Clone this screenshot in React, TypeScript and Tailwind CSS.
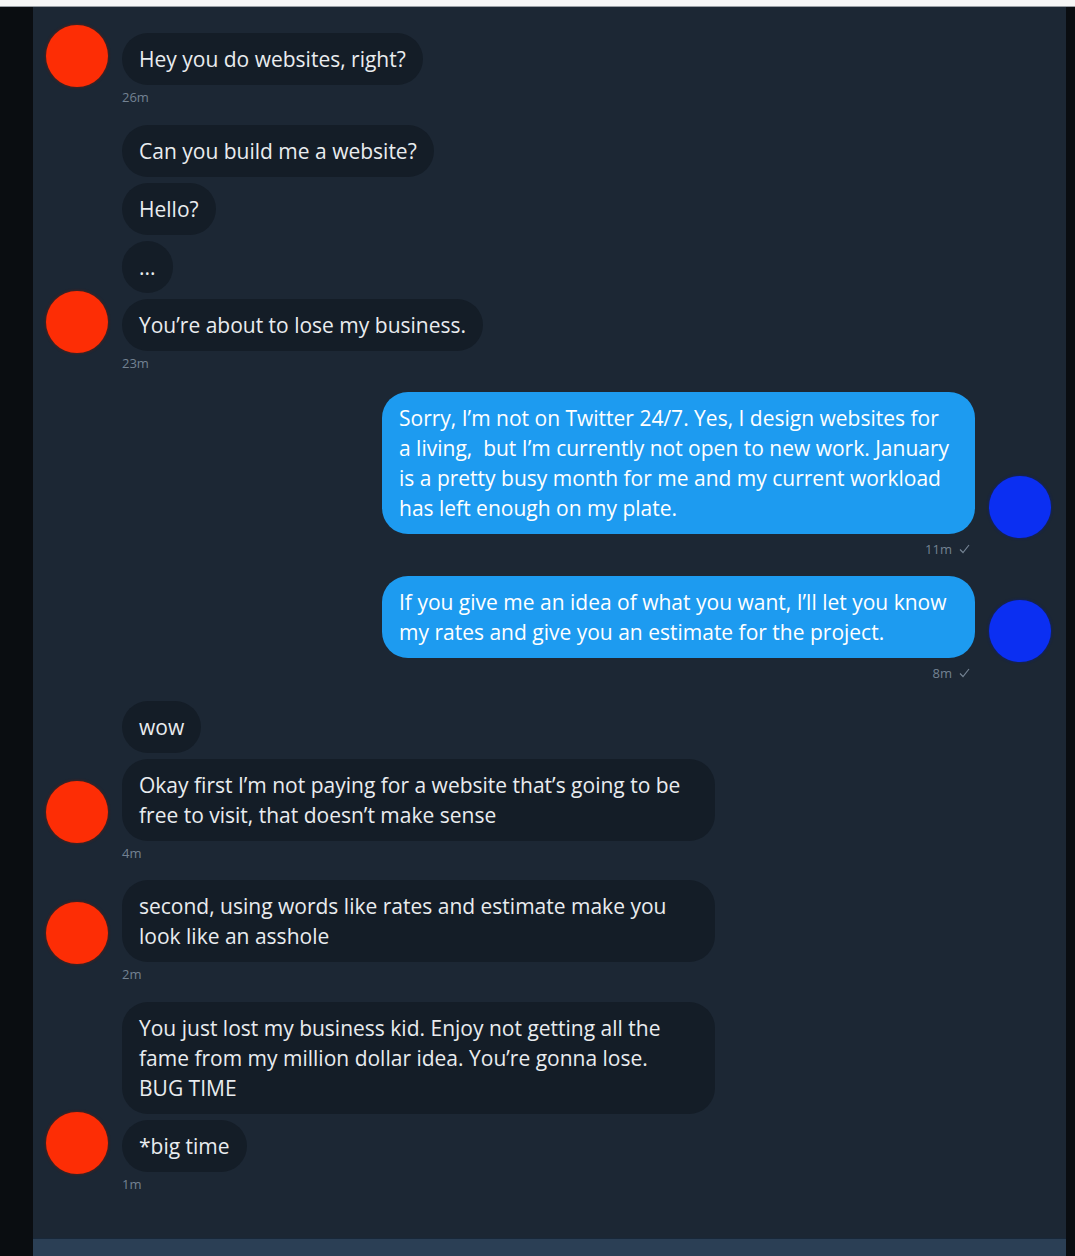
import React from 'react';

const font = { fontFamily: '"Open Sans", "Noto Sans", sans-serif' };

function Avatar({ color }: { color: 'red' | 'blue' }) {
  return (
    <div
      className={`w-[62px] h-[62px] rounded-full shrink-0 ${
        color === 'red' ? 'bg-[#fd2d05] shadow-[0_0_3px_#7a1a08]' : 'bg-[#0b2ff2] shadow-[0_0_3px_#0a1e8a]'
      }`}
    />
  );
}

function Bubble({ lines, wide, mine }: { lines: string[]; wide?: boolean; mine?: boolean }) {
  return (
    <div
      className={`rounded-[26px] px-[17px] py-[11px] text-[21px] leading-[30px] ${wide ? 'w-[593px]' : 'w-fit'} ${
        mine ? 'bg-[#1d9bf0] text-white' : 'bg-[#141d27] text-[#e9ecef]'
      }`}
    >
      {lines.map((l, i) => (
        <div key={i} className="whitespace-pre">{l}</div>
      ))}
    </div>
  );
}

function Stamp({ text, right }: { text: string; right?: boolean }) {
  return (
    <div className={`flex items-center gap-[7px] text-[13px] leading-[16px] text-[#738292] ${right ? 'justify-end pr-[81px] mt-[7px]' : 'pl-[76px] mt-[4px]'}`}>
      <span>{text}</span>
      {right && (
        <svg width="11" height="10" viewBox="0 0 11 10" fill="none">
          <path d="M1 5.5 L4 8.5 L10 1" stroke="#738292" strokeWidth="1.2" />
        </svg>
      )}
    </div>
  );
}

function Theirs({ bubbles, time, className = '' }: { bubbles: { lines: string[]; wide?: boolean }[]; time: string; className?: string }) {
  return (
    <div className={className}>
      <div className="flex items-end gap-[14px]">
        {/* avatar pokes up above a single-line bubble */}
        <div className="h-[50px] flex flex-col justify-end mb-[-2px]">
          <Avatar color="red" />
        </div>
        <div className="flex flex-col gap-[6px]">
          {bubbles.map((b, i) => (
            <Bubble key={i} lines={b.lines} wide={b.wide} />
          ))}
        </div>
      </div>
      <Stamp text={time} />
    </div>
  );
}

function Mine({ lines, time, className = '' }: { lines: string[]; time: string; className?: string }) {
  return (
    <div className={className}>
      <div className="flex items-end justify-end gap-[14px]">
        <Bubble lines={lines} wide mine />
        <div className="mb-[-4px]"><Avatar color="blue" /></div>
      </div>
      <Stamp text={time} right />
    </div>
  );
}

export default function App() {
  return (
    <div className="w-[1075px] h-[1256px] flex flex-col bg-[#090c0f] overflow-hidden" style={font}>
      <div className="h-[7px] bg-[#f6f6f6] border-b border-[#9a9fa5]" />
      <div className="flex flex-1 min-h-0">
        <div className="w-[33px] bg-[#0a0d11]" />
        <div className="flex-1 flex flex-col bg-[#1c2734]">
          <div className="flex-1 pt-[26px] pl-[13px] pr-[15px]">
            <Theirs bubbles={[{ lines: ['Hey you do websites, right?'] }]} time="26m" />
            <Theirs
              className="mt-[20px]"
              bubbles={[
                { lines: ['Can you build me a website?'] },
                { lines: ['Hello?'] },
                { lines: ['...'] },
                { lines: ['You’re about to lose my business.'] },
              ]}
              time="23m"
            />
            <Mine
              className="mt-[21px]"
              lines={[
                'Sorry, I’m not on Twitter 24/7. Yes, I design websites for',
                'a living,  but I’m currently not open to new work. January',
                'is a pretty busy month for me and my current workload',
                'has left enough on my plate.',
              ]}
              time="11m"
            />
            <Mine
              className="mt-[19px]"
              lines={[
                'If you give me an idea of what you want, I’ll let you know',
                'my rates and give you an estimate for the project.',
              ]}
              time="8m"
            />
            <Theirs
              className="mt-[20px]"
              bubbles={[
                { lines: ['wow'] },
                { lines: ['Okay first I’m not paying for a website that’s going to be', 'free to visit, that doesn’t make sense'], wide: true },
              ]}
              time="4m"
            />
            <Theirs
              className="mt-[19px]"
              bubbles={[{ lines: ['second, using words like rates and estimate make you', 'look like an asshole'], wide: true }]}
              time="2m"
            />
            <Theirs
              className="mt-[20px]"
              bubbles={[
                {
                  lines: [
                    'You just lost my business kid. Enjoy not getting all the',
                    'fame from my million dollar idea. You’re gonna lose.',
                    'BUG TIME',
                  ],
                  wide: true,
                },
                { lines: ['*big time'] },
              ]}
              time="1m"
            />
          </div>
          <div className="h-[18px] bg-[#2b3f55] border-t border-[#18283a]" />
        </div>
        <div className="w-[9px] bg-[#0a0d11]" />
      </div>
    </div>
  );
}
